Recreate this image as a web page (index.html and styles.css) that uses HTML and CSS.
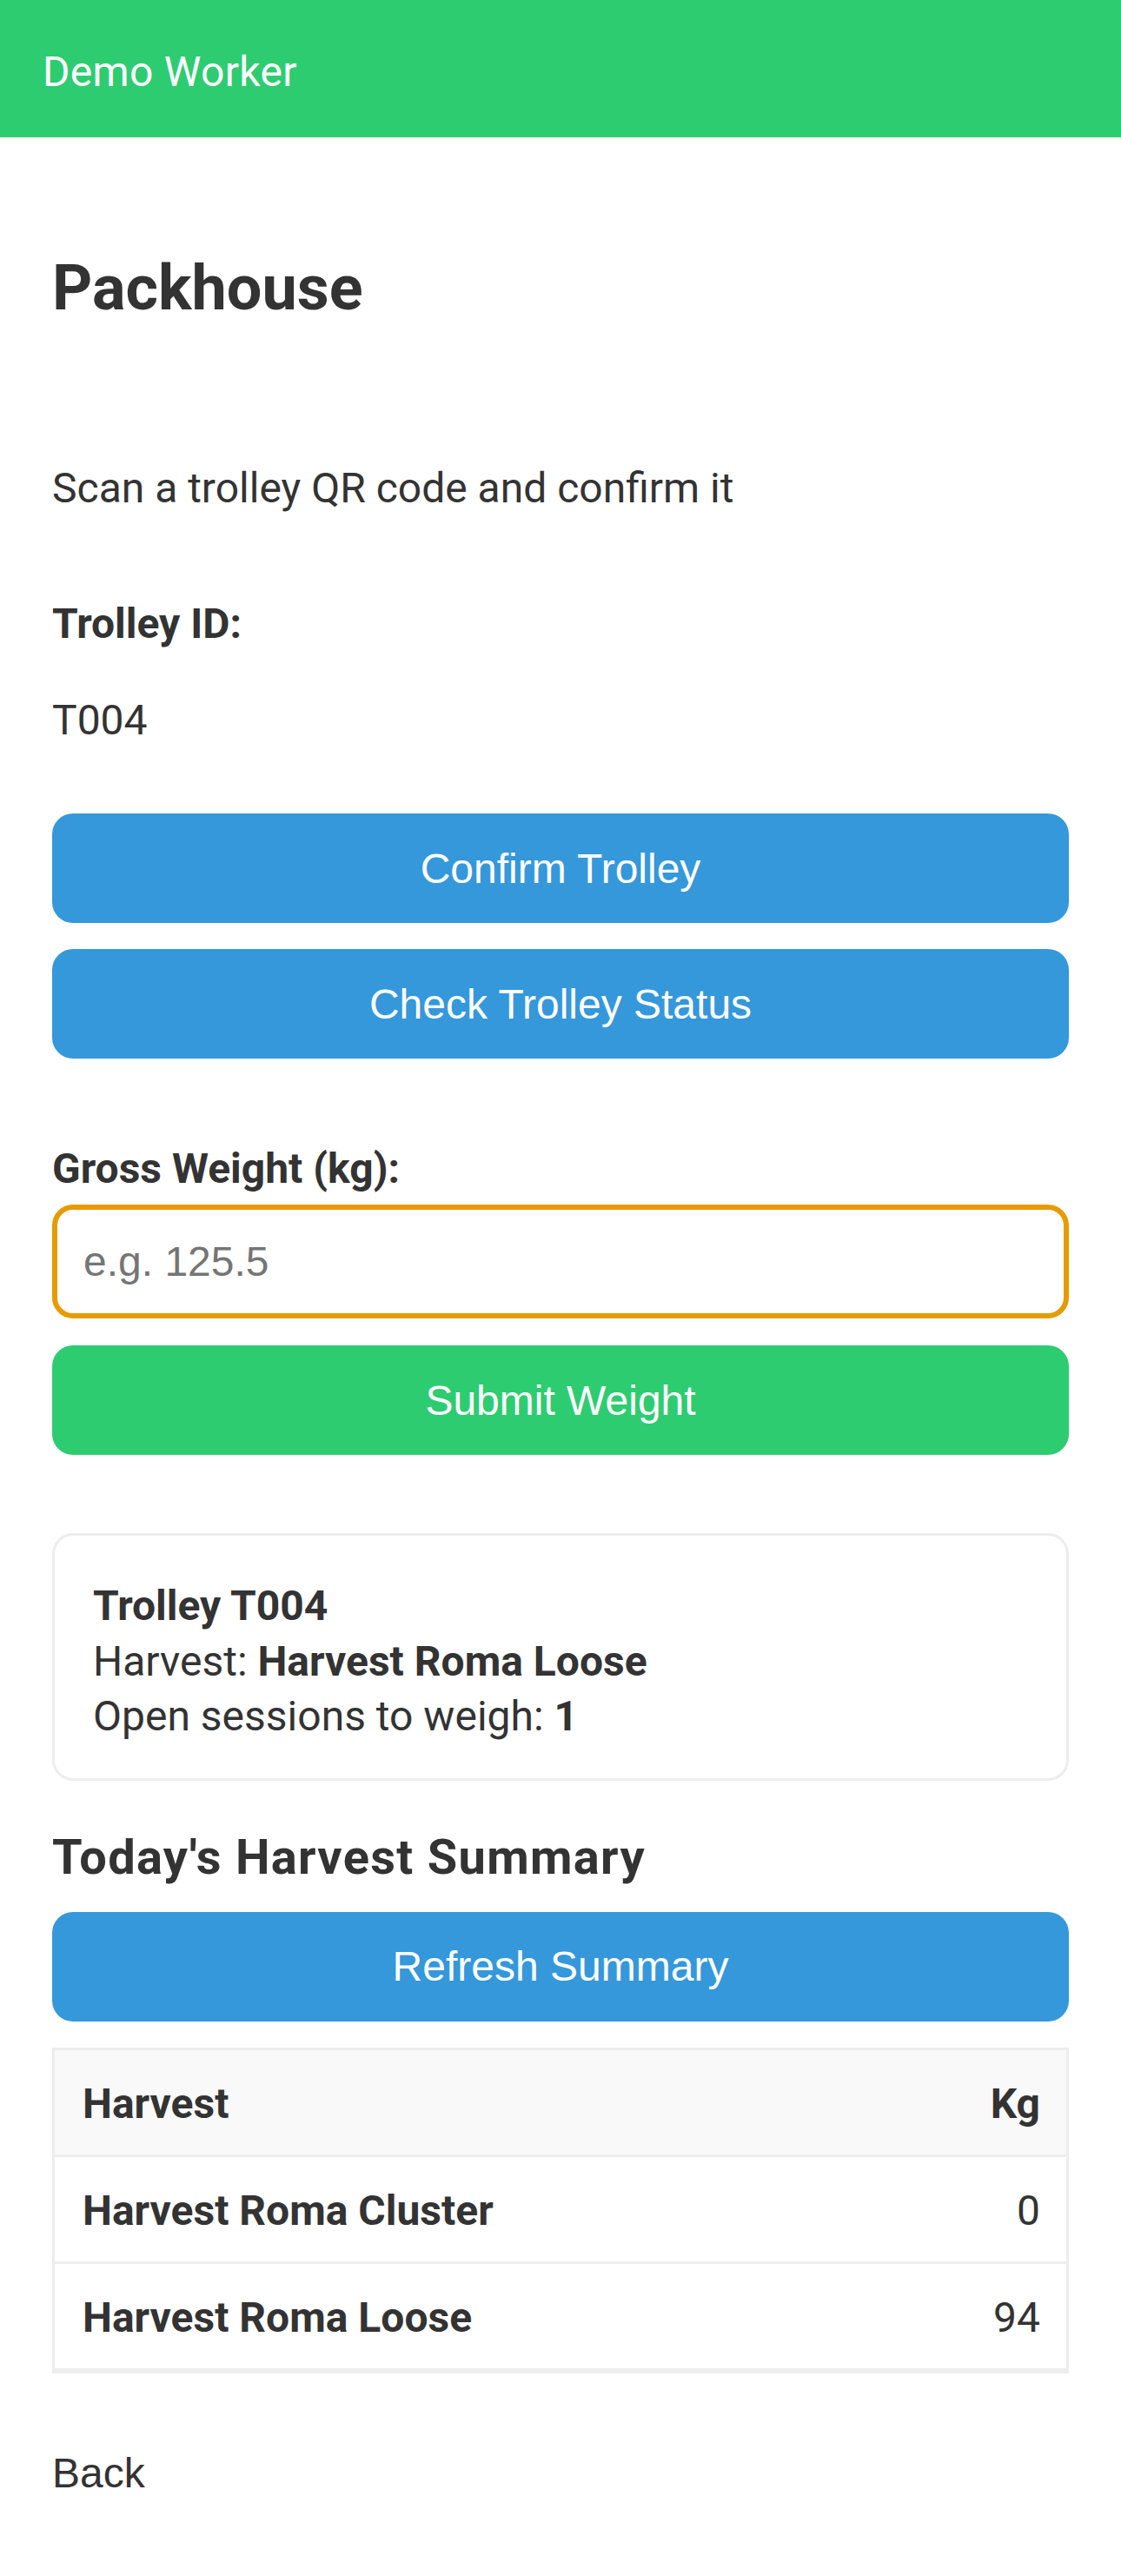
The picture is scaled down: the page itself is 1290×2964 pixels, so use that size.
FILE: index.html
```html
<!DOCTYPE html>
<html lang="en">
<head>
<meta charset="utf-8">
<title>Packhouse</title>
<link rel="stylesheet" href="styles.css">
</head>
<body>
<header class="topbar">
  <span class="topbar-title">Demo Worker</span>
</header>
<main class="page">
  <h1 class="page-title">Packhouse</h1>
  <p class="intro">Scan a trolley QR code and confirm it</p>
  <p class="field-label trolley-label">Trolley ID:</p>
  <p class="field-value">T004</p>
  <button class="btn btn-blue btn-confirm" type="button">Confirm Trolley</button>
  <button class="btn btn-blue btn-status" type="button">Check Trolley Status</button>
  <label class="field-label weight-label" for="weight">Gross Weight (kg):</label>
  <input id="weight" class="weight-input" type="text" placeholder="e.g. 125.5">
  <button class="btn btn-green btn-submit" type="button">Submit Weight</button>
  <div class="trolley-card">
    <div class="card-line card-title">Trolley T004</div>
    <div class="card-line">Harvest: <strong>Harvest Roma Loose</strong></div>
    <div class="card-line">Open sessions to weigh: <strong>1</strong></div>
  </div>
  <h3 class="summary-title">Today's Harvest Summary</h3>
  <button class="btn btn-blue btn-refresh" type="button">Refresh Summary</button>
  <table class="summary-table">
    <thead>
      <tr><th class="col-name">Harvest</th><th class="col-kg">Kg</th></tr>
    </thead>
    <tbody>
      <tr><td class="col-name">Harvest Roma Cluster</td><td class="col-kg">0</td></tr>
      <tr><td class="col-name">Harvest Roma Loose</td><td class="col-kg">94</td></tr>
    </tbody>
  </table>
  <a class="back-link" href="#">Back</a>
</main>
</body>
</html>
```

FILE: styles.css
```css
* {
  box-sizing: border-box;
}

body {
  margin: 0;
  background: #ffffff;
  color: #333333;
  font-family: Roboto, "Noto Sans", "Liberation Sans", sans-serif;
  font-size: 48px;
  line-height: 64px;
}

.topbar {
  height: 158px;
  padding: 51px 49px 0;
  background: #2ecc71;
}

.topbar-title {
  display: block;
  color: #ffffff;
  font-size: 48px;
  line-height: 64px;
  letter-spacing: 0.3px;
}

.page {
  padding: 0 60px 120px;
  display: flex;
  flex-direction: column;
  align-items: stretch;
}

.page-title {
  margin: 126px 0 0;
  font-size: 72px;
  line-height: 96px;
  font-weight: 700;
}

.intro {
  margin: 150px 0 0;
}

.field-label {
  margin: 0;
  font-weight: 700;
  display: block;
}

.trolley-label {
  margin-top: 92px;
}

.field-value {
  margin: 47px 0 0;
}

.btn {
  display: block;
  width: 100%;
  height: 126px;
  border: none;
  border-radius: 24px;
  color: #ffffff;
  font-family: "Liberation Sans", Arial, sans-serif;
  font-size: 48px;
  cursor: pointer;
}

.btn-blue {
  background: #3498db;
}

.btn-green {
  background: #2ecc71;
}

.btn-confirm {
  margin-top: 75px;
}

.btn-status {
  margin-top: 30px;
}

.weight-label {
  margin-top: 95px;
}

.weight-input {
  display: block;
  width: 100%;
  height: 131px;
  margin-top: 9px;
  padding: 0 30px;
  border: 6px solid #e69b00;
  border-radius: 24px;
  background: #ffffff;
  color: #333333;
  font-family: "Liberation Sans", Arial, sans-serif;
  font-size: 48px;
  outline: none;
}

.weight-input::placeholder {
  color: #757575;
}

.btn-submit {
  margin-top: 31px;
}

.trolley-card {
  margin-top: 90px;
  padding: 49px 44px 39px;
  border: 3px solid #ededed;
  border-radius: 24px;
}

.card-line {
  line-height: 63.5px;
}

.card-title {
  font-weight: 700;
}

.summary-title {
  margin: 51px 0 0;
  font-size: 56px;
  line-height: 75px;
  font-weight: 700;
  letter-spacing: 1.3px;
}

.btn-refresh {
  margin-top: 25px;
}

.summary-table {
  margin-top: 30px;
  width: 100%;
  border: 3px solid #ededed;
  border-collapse: separate;
  border-spacing: 0;
}

.summary-table th,
.summary-table td {
  padding: 30px 30px 26px 32px;
  border-bottom: 3px solid #ededed;
  line-height: 64px;
  font-size: 48px;
}

.summary-table thead th {
  background: #f9f9f9;
  font-weight: 700;
}

.summary-table .col-name {
  text-align: left;
  font-weight: 700;
}

.summary-table .col-kg {
  text-align: right;
}

.summary-table td.col-kg {
  font-weight: 400;
}

.back-link {
  align-self: flex-start;
  margin-top: 83px;
  color: #333333;
  text-decoration: none;
  font-family: "Liberation Sans", Arial, sans-serif;
  font-size: 48px;
  line-height: 64px;
}
```
